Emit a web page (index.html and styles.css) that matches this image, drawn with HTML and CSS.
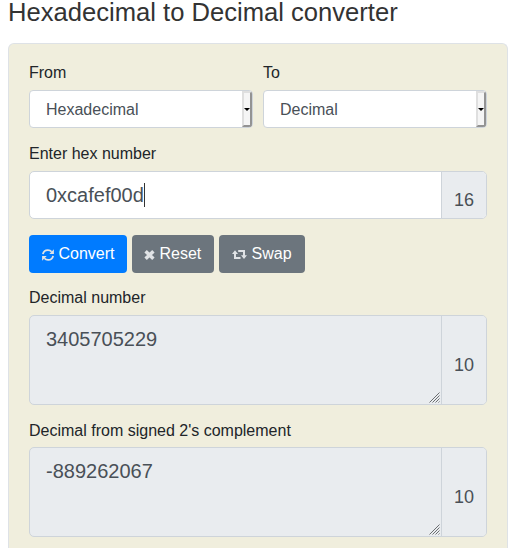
FILE: index.html
```html
<!DOCTYPE html>
<html lang="en">
<head>
<meta charset="utf-8">
<title>Hexadecimal to Decimal converter</title>
<link rel="stylesheet" href="styles.css">
</head>
<body>
<h1>Hexadecimal to Decimal converter</h1>
<form class="panel">
  <div class="row">
    <div class="field">
      <label>From</label>
      <div class="select"><span>Hexadecimal</span><i class="drop"></i></div>
    </div>
    <div class="field">
      <label>To</label>
      <div class="select"><span>Decimal</span><i class="drop"></i></div>
    </div>
  </div>
  <div class="field entry">
    <label>Enter hex number</label>
    <div class="group">
      <div class="value">0xcafef00d<i class="caret"></i></div>
      <div class="base">16</div>
    </div>
  </div>
  <div class="actions">
    <button type="button" class="primary"><svg width="12" height="12" viewBox="0 0 12 12"><path d="M.9 5.2C1.4 2.6 3.4 1.1 5.9 1.1c1.500 0 2.800.6 3.700 1.700M11.100 6.800c-.5 2.600-2.500 4.100-5 4.100-1.500 0-2.800-.6-3.700-1.700" fill="none" stroke="currentColor" stroke-width="1.800"/><path d="M11.900.3v4.600H7.300zM.1 11.700V7.100h4.600z" fill="currentColor"/></svg>Convert</button>
    <button type="button" class="reset"><svg width="11" height="10" viewBox="0 0 11 10"><path d="M1.600 1.300l7.800 7.400M9.400 1.300L1.600 8.700" stroke="currentColor" stroke-width="3.500"/></svg>Reset</button>
    <button type="button" class="swap"><svg width="15" height="10" viewBox="0 0 15 10"><path d="M3 3v5h5.500M6.200 1h5.800v5" fill="none" stroke="currentColor" stroke-width="2"/><path d="M0 4L3 .3 6 4zM9 5.300h6L12 9z" fill="currentColor"/></svg>Swap</button>
  </div>
  <div class="field result">
    <label>Decimal number</label>
    <div class="group tall">
      <div class="value">3405705229<svg class="grip" width="11" height="11" viewBox="0 0 11 11"><path d="M.5 10.500l10-10M3.500 10.500l7-7M6.500 10.500l4-4M9.500 10.500l1-1"/></svg></div>
      <div class="base">10</div>
    </div>
  </div>
  <div class="field result last">
    <label>Decimal from signed 2's complement</label>
    <div class="group tall">
      <div class="value">-889262067<svg class="grip" width="11" height="11" viewBox="0 0 11 11"><path d="M.5 10.500l10-10M3.500 10.500l7-7M6.500 10.500l4-4M9.500 10.500l1-1"/></svg></div>
      <div class="base">10</div>
    </div>
  </div>
</form>
</body>
</html>
```
FILE: styles.css
```css
* { box-sizing: border-box; }
body {
  margin: 0;
  padding: 0 9px 0 8px;
  background: #fff;
  color: #212529;
  font: 16px/24px "Liberation Sans", Arial, sans-serif;
}
h1 {
  margin: 0 0 19px;
  font-size: 25.6px;
  font-weight: 400;
  line-height: 24px;
  color: #333;
  white-space: nowrap;
}
.panel {
  height: 505px;
  padding: 17px 20px 0;
  background: #f0eedd;
  border: 1px solid #dee2e6;
  border-bottom: 0;
  border-radius: 6px 6px 0 0;
}
.row { display: grid; grid-template-columns: 1fr 1fr; gap: 10px; }
label { display: block; margin-bottom: 5px; }
.select {
  display: flex;
  justify-content: space-between;
  height: 38px;
  padding-left: 16px;
  overflow: hidden;
  background: #fff;
  border: 1px solid #ced4da;
  border-radius: 4px;
  color: #495057;
  line-height: 38px;
}
.drop {
  display: flex;
  align-items: center;
  justify-content: center;
  width: 10px;
  height: 36px;
  background: #f5f5f5;
  border: 2px solid #dfdfdf;
  border-right-color: #939393;
  border-bottom-color: #939393;
}
.drop::before {
  content: "";
  flex: none;
  border: 3px solid transparent;
  border-top-color: #000;
  border-bottom: 0;
}
.entry { margin-top: 14px; }
.group {
  display: flex;
  height: 48px;
  background: #fff;
  border: 1px solid #ced4da;
  border-radius: 5px;
  overflow: hidden;
  color: #495057;
}
.value {
  position: relative;
  flex: 1;
  padding: 8px 16px;
  font-size: 20px;
  line-height: 30px;
}
.caret {
  display: inline-block;
  width: 1px;
  height: 24px;
  background: #333;
  vertical-align: -5px;
}
.base {
  display: flex;
  align-items: center;
  justify-content: center;
  width: 45px;
  padding-top: 10px;
  background: #e9ecef;
  border-left: 1px solid #ced4da;
  font-size: 18px;
}
.actions { display: flex; gap: 5px; margin: 16px 0 13px; }
button {
  display: flex;
  align-items: center;
  gap: 4.500px;
  height: 38px;
  padding: 0 0 0 13px;
  border: 0;
  border-radius: 4px;
  background: #6c757d;
  color: #fff;
  font: inherit;
}
button svg { flex: none; margin-top: 2px; color: #e0e3e6; }
.primary { width: 98px; background: #007bff; }
.reset { width: 82px; padding-left: 12px; }
.swap { width: 86px; }
.result { margin-bottom: 14px; }
.last label { margin-bottom: 4px; }
.tall { height: 90px; background: #e9ecef; }
.grip {
  position: absolute;
  right: 1px;
  bottom: 1px;
  fill: none;
  stroke: #6b6e71;
  stroke-width: 1;
}
```
